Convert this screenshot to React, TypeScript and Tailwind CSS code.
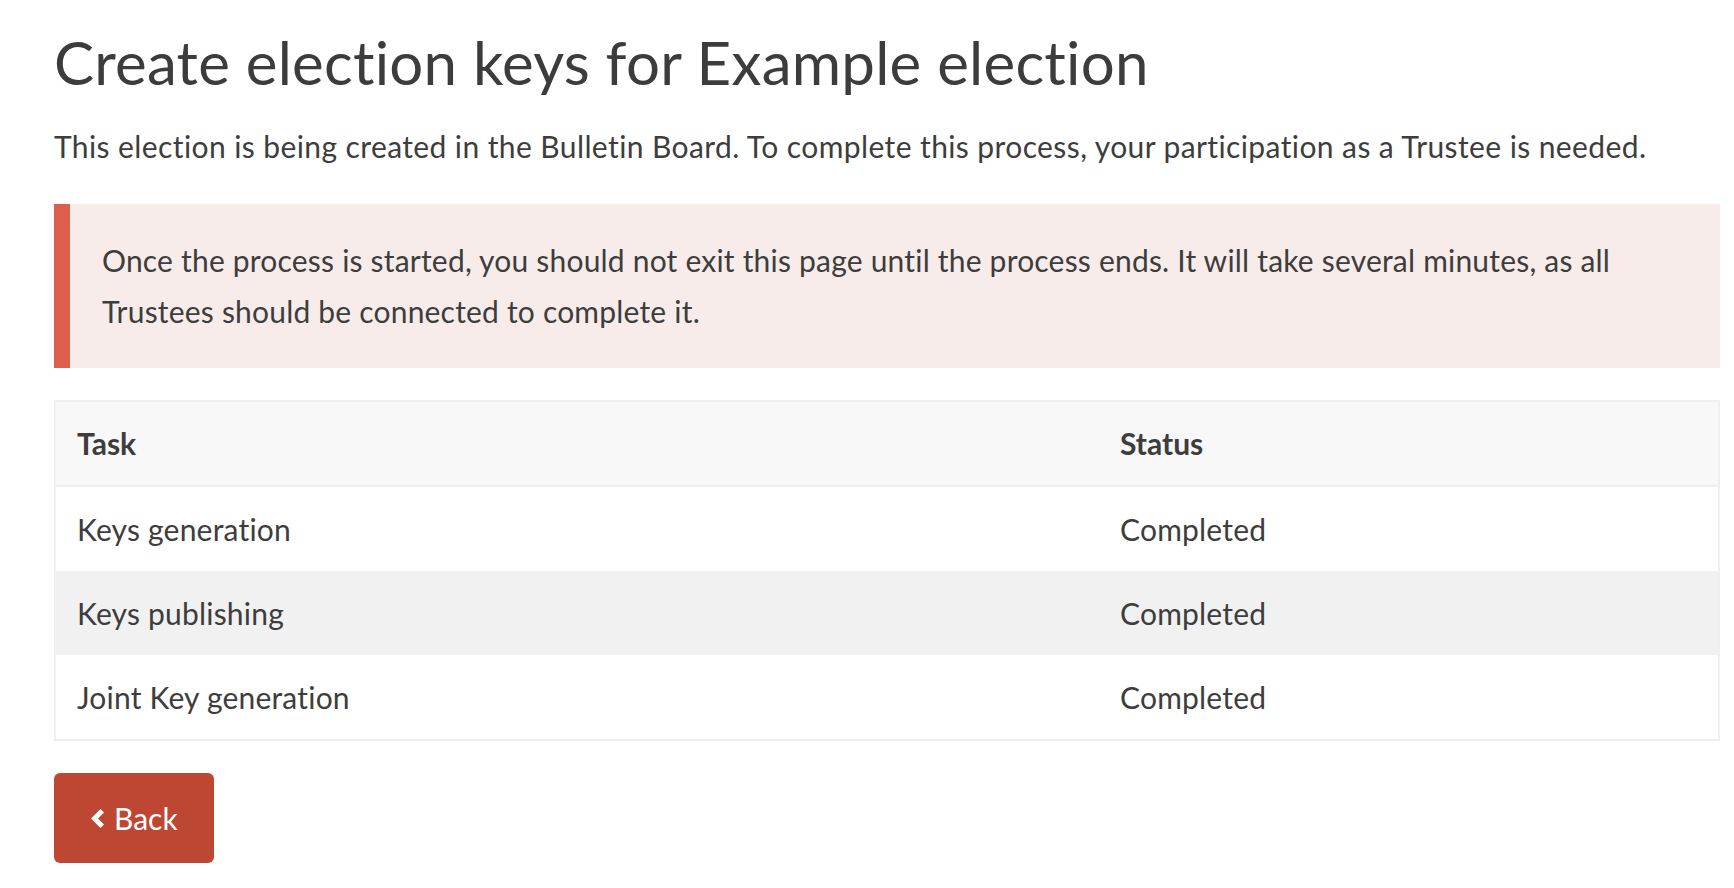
import React from "react";

const rows = [
  { task: "Keys generation", status: "Completed", striped: false },
  { task: "Keys publishing", status: "Completed", striped: true },
  { task: "Joint Key generation", status: "Completed", striped: false },
];

export default function App() {
  return (
    <div
      className="min-h-screen bg-white text-[#3d3d3d] pl-[54px] pr-[14px] [font-variant-ligatures:none]"
      style={{ fontFamily: "Lato, 'Noto Sans', sans-serif" }}
    >
      <h1 className="pt-[32px] text-[60px] leading-[60px] tracking-[0.25px] font-normal text-[#3d3c3d] whitespace-nowrap">
        Create election keys for Example election
      </h1>
      <p className="mt-[39px] text-[30px] leading-[30px] tracking-[0.4px] whitespace-nowrap">
        This election is being created in the Bulletin Board. To complete this process, your participation as a Trustee is needed.
      </p>

      <div className="mt-[43px] bg-[#f8ecea] border-l-[16px] border-[#dc5f4b] pl-[32px] pr-[32px] py-[31px] text-[30px] leading-[51px] tracking-[0.2px]">
        Once the process is started, you should not exit this page until the process ends. It will take several minutes, as all
        <br />
        Trustees should be connected to complete it.
      </div>

      <div className="mt-[32px] border-2 border-[#efefef]">
        <div className="flex items-center h-[85px] bg-[#f8f8f8] border-b-2 border-[#efefef] text-[30px] font-bold">
          <div className="w-[1043px] pl-[21px]">Task</div>
          <div className="pl-[21px]">Status</div>
        </div>
        {rows.map((r) => (
          <div
            key={r.task}
            className={`flex items-center h-[84px] text-[30px] tracking-[0.2px] ${r.striped ? "bg-[#f1f1f1]" : "bg-white"}`}
          >
            <div className="w-[1043px] pl-[21px]">{r.task}</div>
            <div className="pl-[21px]">{r.status}</div>
          </div>
        ))}
      </div>

      <button className="mt-[32px] h-[90px] px-[36px] rounded-[6px] bg-[#bd4733] text-white text-[30px] flex items-center gap-[10px]">
        <svg width="14" height="19" viewBox="0 0 14 19" aria-hidden="true">
          <path d="M10.5 0 L14 3.5 L8 9.5 L14 15.5 L10.5 19 L1 9.5 Z" fill="white" />
        </svg>
        <span className="leading-none">Back</span>
      </button>
    </div>
  );
}
